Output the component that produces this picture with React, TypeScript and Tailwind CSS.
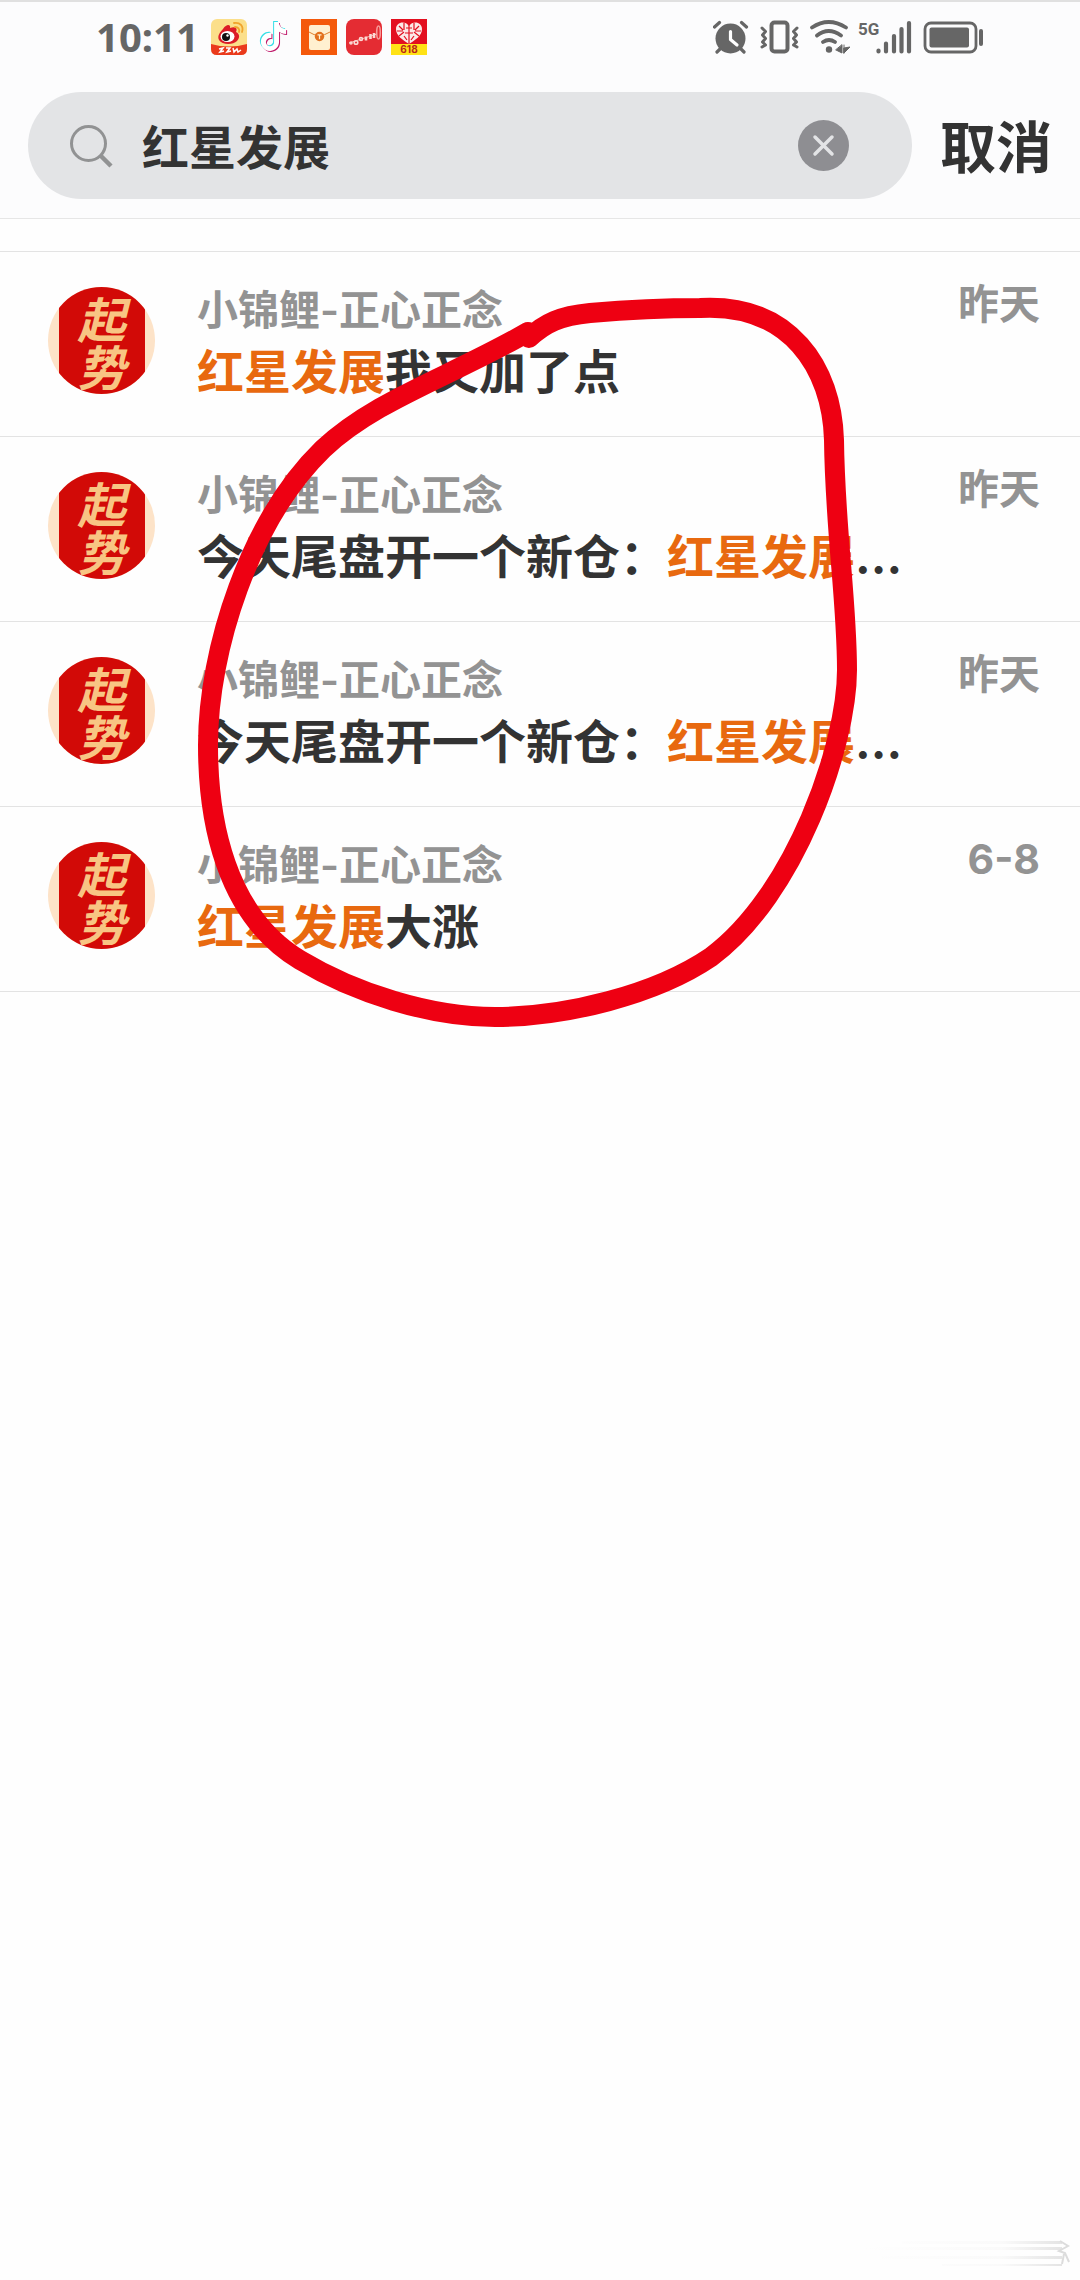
import { useState } from "react"
import { SiTiktok } from "react-icons/si"

const KEYWORD = "红星发展"

const RESULTS = [
  { id: 1, name: "小锦鲤-正心正念", before: "", after: "我又加了点", time: "昨天" },
  { id: 2, name: "小锦鲤-正心正念", before: "今天尾盘开一个新仓：", after: "...", time: "昨天" },
  { id: 3, name: "小锦鲤-正心正念", before: "今天尾盘开一个新仓：", after: "...", time: "昨天" },
  { id: 4, name: "小锦鲤-正心正念", before: "", after: "大涨", time: "6-8" },
]

function AppIcons() {
  return (
    <div className="flex items-center gap-[9px]">
      {/* Weibo */}
      <svg className="size-9" viewBox="0 0 36 36">
        <rect width="36" height="36" rx="6" fill="#fbdf8a" />
        <path d="M12 10c4-6 8-4 7-1 5-2 8 0 6 4 4 2 4 6 1 9-4 4-15 4-18-1-2-4 1-8 4-11z" fill="#dc1c28" />
        <ellipse cx="16.500" cy="17.500" rx="7" ry="5.500" fill="#fff" />
        <circle cx="15" cy="18" r="4" fill="#111" />
        <circle cx="16.500" cy="16.500" r="1.200" fill="#fff" />
        <path d="M24 8c3 0 5 2 4 5M23 4c6-1 10 3 8 9" fill="none" stroke="#f0a42c" strokeWidth="1.800" strokeLinecap="round" />
        <path d="M0 25q18 5 36 0v5q0 6-6 6H6q-6 0-6-6z" fill="#ea3a1c" />
        <path d="M8 30l4-1-3 4 4-1M15 29l4 0-3 4 4-1M22 29l1 4 3-3 1 3 3-2" fill="none" stroke="#fff" strokeWidth="1.500" />
      </svg>
      {/* Douyin */}
      <svg className="size-9" viewBox="0 0 36 36">
        <SiTiktok x="2" y="2" size={29} color="#35dfe6" />
        <SiTiktok x="4" y="4" size={29} color="#c01a6b" />
        <SiTiktok x="3" y="3" size={29} color="#fff" />
      </svg>
      {/* Envelope */}
      <svg className="size-9" viewBox="0 0 36 36">
        <rect width="36" height="36" fill="#f4590b" />
        <rect x="8" y="6" width="21" height="25" rx="2" fill="#fff0d0" />
        <path d="M8 13q10 7 21 0" fill="none" stroke="#e0802c" strokeWidth="1" />
        <circle cx="18.500" cy="17.500" r="4.700" fill="#e2701d" />
        <path d="M16.500 15.800h4M18.500 15.800v4.500" stroke="#fff0d0" strokeWidth="1.200" />
      </svg>
      {/* Game */}
      <svg className="size-9" viewBox="0 0 36 36">
        <rect width="36" height="36" rx="8" fill="#e42c33" />
        <path d="M3 24l28-9" stroke="#f6b9b4" strokeWidth="1" />
        <g fill="none" stroke="#fbd9d4" strokeWidth="1.600">
          <circle cx="5" cy="24" r="1" />
          <circle cx="10" cy="23.500" r="1.800" />
          <circle cx="15" cy="20" r="1.500" />
          <path d="M20 17.500v4M24.500 15v5M28 14v5" strokeWidth="2.600" />
          <ellipse cx="32.500" cy="13.500" rx="1.800" ry="6.500" stroke="#f79a98" />
        </g>
      </svg>
      {/* Shopping, 618 sale */}
      <svg className="size-9" viewBox="0 0 36 36">
        <rect width="36" height="36" fill="#e30f1f" />
        <path d="M18 25C12 21 5 17 5 10c0-7 9-9 13-3 4-6 13-4 13 3 0 7-7 11-13 15z" fill="#fbe9e7" />
        <path d="M18 6v19M8 7l4 4M6 12h6M8 17l5-4M13 4v7M28 7l-4 4M30 12h-6M28 17l-5-4M23 4v7M14 14h8M13 17l3 4M23 17l-3 4M15 9h6" fill="none" stroke="#e30f1f" strokeWidth="1.200" />
        <rect y="25" width="36" height="11" fill="#ffe216" />
        <text x="18" y="34" textAnchor="middle" fontSize="10" fontWeight="700" fill="#b8261a" fontFamily="Inter">618</text>
      </svg>
    </div>
  )
}

function SystemIcons() {
  return (
    <svg className="h-9 w-[270px]" viewBox="0 0 270 36" fill="none" stroke="#666" strokeLinecap="round" strokeLinejoin="round">
      {/* Alarm */}
      <circle cx="17.500" cy="19.500" r="15" fill="#666" stroke="none" />
      <path d="M1.500 8l5-4.500M33.500 8l-5-4.500M7 30l-3 3M28 30l3 3" strokeWidth="3.200" />
      <path d="M17.500 12.500v8l6.500 5.500" stroke="#fff" strokeWidth="3.200" />
      {/* Vibrate */}
      <rect x="58.500" y="3.500" width="16" height="29" rx="3" strokeWidth="4" />
      <path d="M49 9l3.500 3.500-3 3.500 3 3.500-3 3.500 3 3L49 28M84 9l-3.500 3.500 3 3.500-3 3.500 3 3.500-3 3L84 28" strokeWidth="3" />
      {/* Wi-Fi */}
      <path d="M99 8.500q16.500-11 34 0M104 16.500q11.500-9 24 0M110 23q6-4 12 0" strokeWidth="3.800" />
      <circle cx="116" cy="30.500" r="3.200" fill="#666" stroke="none" />
      <path d="M129 26v8l-6-3zM131 26v8M131 29l6-1-6 6z" fill="#666" strokeWidth="1" />
      {/* Signal */}
      <text x="145" y="16" fontSize="17" fontWeight="700" fill="#666" stroke="none" fontFamily="Roboto">5G</text>
      <path d="M165.500 31.500v1M173 24.500v8M181 17v15.500M188.500 10v22.500M196 4v28.500" strokeWidth="4.200" />
      {/* Battery */}
      <rect x="212" y="4" width="51" height="29" rx="6" strokeWidth="2.800" />
      <rect x="216.500" y="8.500" width="39.500" height="20" rx="2" fill="#666" stroke="none" />
      <path d="M268 12v13" strokeWidth="4" />
    </svg>
  )
}

function Avatar() {
  return (
    <div className="flex size-[107px] shrink-0 justify-center overflow-hidden rounded-full bg-[#fde3c8]">
      <div className="flex w-[86px] items-center justify-center bg-[#d20a07]">
        <p className="w-12 font-['Noto_Sans_CJK_SC',sans-serif] text-[48px] leading-12 text-[#f8c583] italic">
          起势
        </p>
      </div>
    </div>
  )
}

function RedCircle() {
  return (
    <svg className="pointer-events-none absolute top-0 left-0 h-[780px] w-[880px]" viewBox="0 251 880 780" fill="none">
      <path
        d="M529 338C545 323 560 316 590 313C625 310 665 308 700 308C790 303 832 368 834 440C835 530 847 600 847 670C847 745 795 895 711 957C655 995 565 1017 495 1017C430 1017 355 993 300 960C225 915 208 820 208 745C208 650 250 520 323 449C375 400 450 377 528 332"
        stroke="#ee0012"
        strokeWidth="20"
        strokeLinecap="round"
        strokeLinejoin="round"
      />
    </svg>
  )
}

function Watermark() {
  return (
    <svg className="mr-2 h-9 w-[290px]" viewBox="0 0 290 36" fill="none" aria-hidden="true">
      <defs>
        <linearGradient id="streak" x1="0" x2="1" y1="0" y2="0">
          <stop offset="0" stopColor="#fefefe" />
          <stop offset="0.7" stopColor="#fafafa" />
          <stop offset="1" stopColor="#e4e4e4" />
        </linearGradient>
      </defs>
      <path d="M120 5h160v3H120zM80 11h200v3H80zM100 20h180v3H100zM160 28h120v2H160z" fill="url(#streak)" />
      <path d="M278 5l8 5-9 5 6 2 4 9M282 18l-2 10" stroke="#dcdcdc" strokeWidth="2" />
    </svg>
  )
}

export default function App() {
  const [query, setQuery] = useState(KEYWORD)

  return (
    <div lang="zh-CN" className="flex min-h-screen flex-col bg-[#fefefe] font-['Inter','Noto_Sans_CJK_SC',sans-serif] font-bold text-[#333]">
      <header className="border-t-2 border-b border-t-[#e0e0e0] border-b-[#e6e6e6] bg-[#fcfcfd]">
        <div className="flex h-[70px] items-center justify-between pr-[97px] pl-24">
          <div className="flex items-center gap-3">
            <span className="font-['Noto_Sans',sans-serif] text-[40px] leading-10 text-[#666]">10:11</span>
            <AppIcons />
          </div>
          <SystemIcons />
        </div>

        <div className="flex items-center gap-7 px-7 pt-5 pb-[19px]">
          <label className="flex h-[107px] min-w-0 flex-1 items-center rounded-full bg-[#e3e4e6] pr-[63px] pl-[42px]">
            <svg className="size-11 shrink-0" viewBox="0 0 44 44" fill="none" stroke="#919293">
              <circle cx="18.500" cy="19.500" r="17" strokeWidth="3" />
              <path d="M31 32l10 10" strokeWidth="4.500" />
            </svg>
            <input
              aria-label="搜索"
              value={query}
              onChange={(e) => setQuery(e.target.value)}
              className="ml-7 min-w-0 flex-1 bg-transparent pt-1 text-[47px] leading-16 outline-none"
            />
            <button type="button" aria-label="清除" onClick={() => setQuery("")} className="shrink-0">
              <svg className="size-[51px]" viewBox="0 0 51 51" fill="none">
                <circle cx="25.500" cy="25.500" r="25.500" fill="#8e8e92" />
                <path d="M17 17l17 17M34 17l-17 17" stroke="#e3e4e6" strokeWidth="3.500" strokeLinecap="round" />
              </svg>
            </button>
          </label>
          <button type="button" className="shrink-0 pt-1 text-[56px] leading-20 whitespace-nowrap">取消</button>
        </div>
      </header>

      <main className="relative mt-8 flex-1">
        <ul className="border-t border-[#e3e3e3]">
          {RESULTS.map((item) => (
            <li key={item.id} className="flex h-[185px] border-b border-[#e3e3e3] pr-10 pl-12">
              <div className="pt-[35px]">
                <Avatar />
              </div>
              <div className="ml-[42px] min-w-0 flex-1 pt-[30px]">
                <p className="text-[41px] leading-14 font-semibold text-[#939393]">{item.name}</p>
                <p className="text-[47px] leading-[68px] whitespace-nowrap">
                  {item.before}
                  <span className="text-[#e8690f]">{KEYWORD}</span>
                  {item.after}
                </p>
              </div>
              <time className="pt-6 text-[41px] leading-14 text-[#939393]">{item.time}</time>
            </li>
          ))}
        </ul>
        <RedCircle />
      </main>

      <footer className="flex justify-end pb-2">
        <Watermark />
      </footer>
    </div>
  )
}
